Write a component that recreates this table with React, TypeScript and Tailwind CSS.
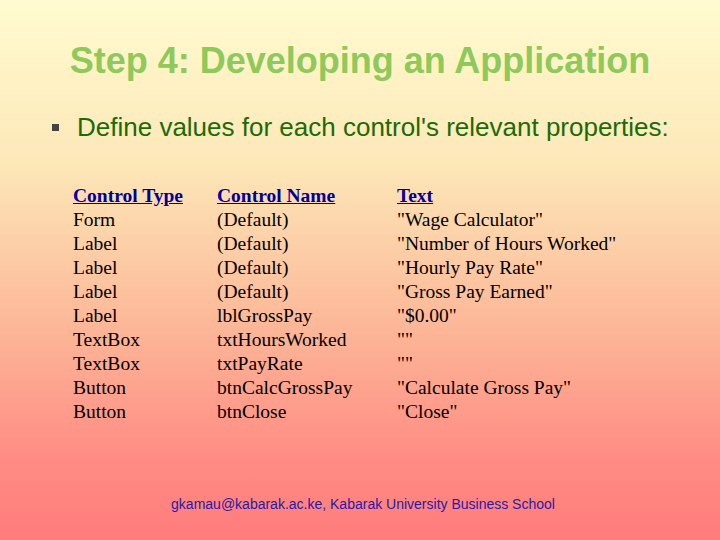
import React from "react";

const rows: [string, string, string][] = [
  ["Form", "(Default)", '"Wage Calculator"'],
  ["Label", "(Default)", '"Number of Hours Worked"'],
  ["Label", "(Default)", '"Hourly Pay Rate"'],
  ["Label", "(Default)", '"Gross Pay Earned"'],
  ["Label", "lblGrossPay", '"$0.00"'],
  ["TextBox", "txtHoursWorked", '""'],
  ["TextBox", "txtPayRate", '""'],
  ["Button", "btnCalcGrossPay", '"Calculate Gross Pay"'],
  ["Button", "btnClose", '"Close"'],
];

export default function App() {
  return (
    <div className="flex h-[540px] w-[720px] flex-col overflow-hidden bg-[linear-gradient(to_bottom,#fffbd0_0%,#fde8b8_30%,#fcb898_60%,#ff8c84_85%,#ff7c7c_100%)] font-['Liberation_Sans',Arial,sans-serif]">
      <h1 className="mt-[40px] text-center text-[36px] font-bold leading-[42px] text-[#8fc95a]">
        Step 4: Developing an Application
      </h1>

      <div className="mt-[30px] flex items-center pl-[52px]">
        <span className="mr-[18px] h-[7px] w-[7px] bg-[#444]" />
        <span className="text-[26px] leading-[30px] text-[#1d6a08]">
          Define values for each control's relevant properties:
        </span>
      </div>

      <div className="mt-[42px] grid grid-cols-[144px_180px_1fr] pl-[73px] font-['Liberation_Serif','Times_New_Roman',serif] text-[19.5px] leading-[24px] text-black">
        <span className="font-bold text-[#000099] underline">Control Type</span>
        <span className="font-bold text-[#000099] underline">Control Name</span>
        <span className="font-bold text-[#000099] underline">Text</span>
        {rows.map(([type, name, text], i) => (
          <React.Fragment key={i}>
            <span>{type}</span>
            <span>{name}</span>
            <span>{text}</span>
          </React.Fragment>
        ))}
      </div>

      <p className="mt-auto mb-[25px] pl-[6px] text-center text-[14px] text-[#2a1aa8]">
        gkamau@kabarak.ac.ke, Kabarak University Business School
      </p>
    </div>
  );
}
